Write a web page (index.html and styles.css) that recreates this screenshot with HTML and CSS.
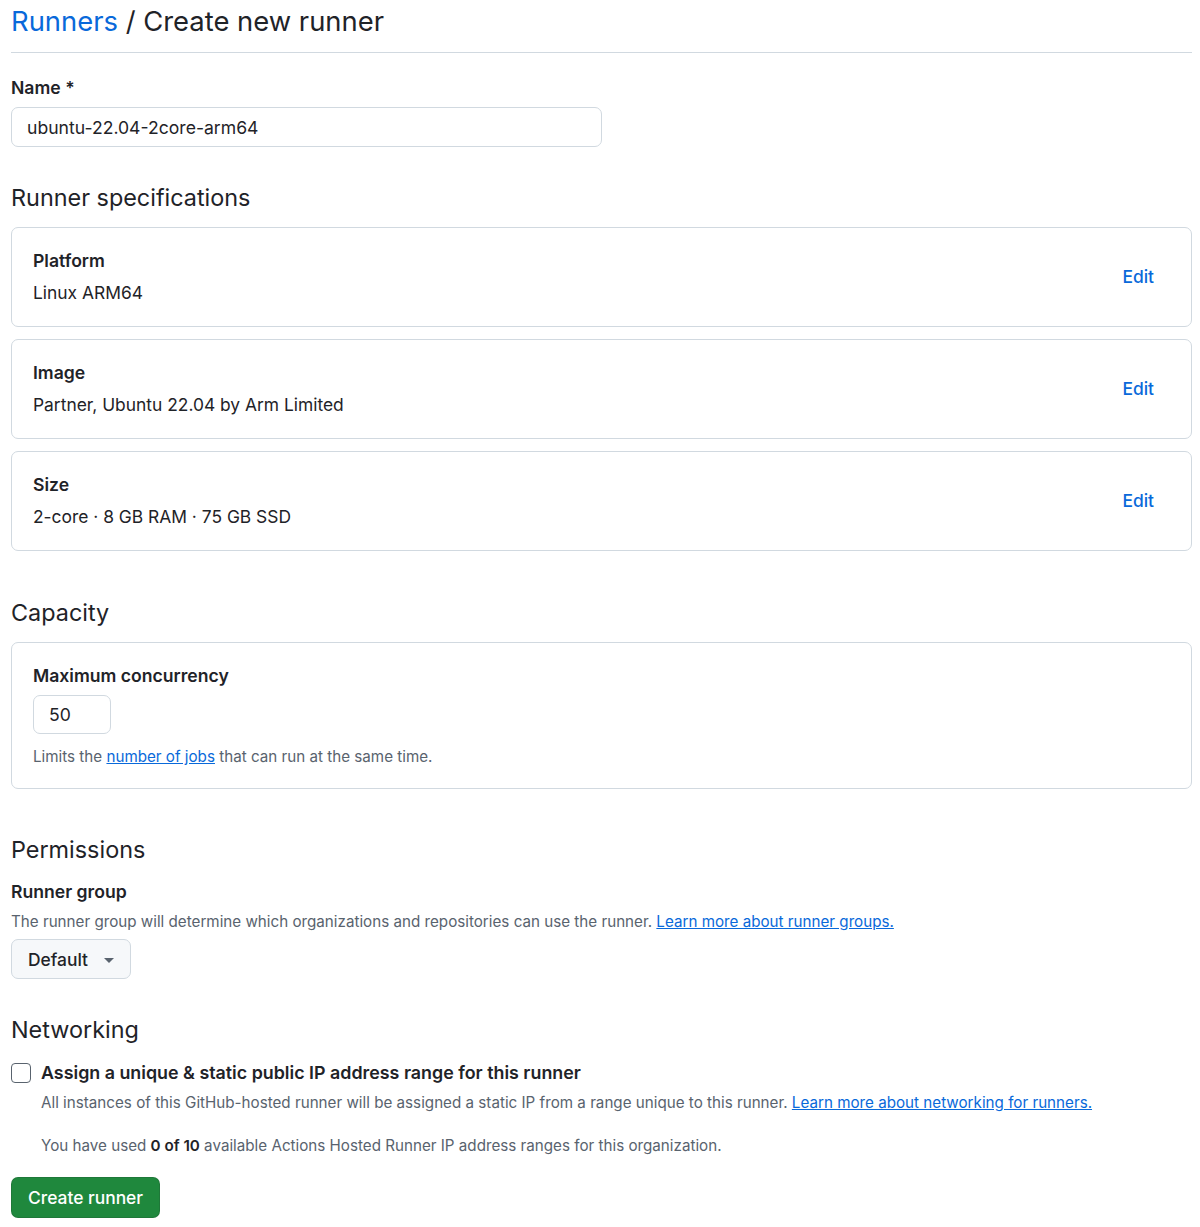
FILE: index.html
```html
<!DOCTYPE html>
<html lang="en">
<head>
<meta charset="utf-8">
<title>Create new runner</title>
<link rel="stylesheet" href="styles.css">
</head>
<body>
<div class="page">
  <header class="page-head">
    <h1 class="title"><a href="#" class="crumb">Runners</a> / Create new runner</h1>
  </header>

  <div class="field">
    <label class="label" for="name">Name *</label>
    <input id="name" class="text-input name-input" type="text" value="ubuntu-22.04-2core-arm64">
  </div>

  <h2 class="section-title spec-title">Runner specifications</h2>
  <div class="spec-list">
    <div class="box spec">
      <div class="spec-body">
        <div class="label">Platform</div>
        <div class="spec-value">Linux ARM64</div>
      </div>
      <a href="#" class="edit">Edit</a>
    </div>
    <div class="box spec">
      <div class="spec-body">
        <div class="label">Image</div>
        <div class="spec-value">Partner, Ubuntu 22.04 by Arm Limited</div>
      </div>
      <a href="#" class="edit">Edit</a>
    </div>
    <div class="box spec">
      <div class="spec-body">
        <div class="label">Size</div>
        <div class="spec-value">2-core · 8 GB RAM · 75 GB SSD</div>
      </div>
      <a href="#" class="edit">Edit</a>
    </div>
  </div>

  <h2 class="section-title cap-title">Capacity</h2>
  <div class="box capacity">
    <label class="label" for="conc">Maximum concurrency</label>
    <input id="conc" class="text-input conc-input" type="text" value="50">
    <p class="note">Limits the <a href="#" class="link">number of jobs</a> that can run at the same time.</p>
  </div>

  <h2 class="section-title perm-title">Permissions</h2>
  <div class="label group-label">Runner group</div>
  <p class="desc">The runner group will determine which organizations and repositories can use the runner. <a href="#" class="link">Learn more about runner groups.</a></p>
  <button class="select-btn" type="button">Default <span class="caret"></span></button>

  <h2 class="section-title net-title">Networking</h2>
  <div class="check-row">
    <span class="checkbox"></span>
    <div class="check-body">
      <div class="label">Assign a unique &amp; static public IP address range for this runner</div>
      <p class="desc check-desc">All instances of this GitHub-hosted runner will be assigned a static IP from a range unique to this runner. <a href="#" class="link">Learn more about networking for runners.</a></p>
      <p class="desc used">You have used <strong>0 of 10</strong> available Actions Hosted Runner IP address ranges for this organization.</p>
    </div>
  </div>

  <button class="primary" type="button">Create runner</button>
</div>
</body>
</html>
```

FILE: styles.css
```css
* { box-sizing: border-box; }

html, body {
  margin: 0;
  padding: 0;
  background: #ffffff;
}

body {
  font-family: Inter, "Noto Sans", "Liberation Sans", sans-serif;
  color: #1f2328;
  font-size: 17.4px;
  line-height: 24px;
}

.page {
  padding: 0 8px 0 11px;
}

.page-head {
  border-bottom: 1px solid #d1d9e0;
  padding: 3px 0 13px;
}

.title {
  margin: 0;
  font-size: 27.4px;
  line-height: 36px;
  font-weight: 400;
  color: #1f2328;
}

.crumb {
  color: #0969da;
  text-decoration: none;
}

.field {
  margin-top: 23px;
}

.label {
  display: block;
  font-weight: 600;
  font-size: 17.6px;
  line-height: 24px;
  color: #1f2328;
}

.check-body .label {
  font-size: 17.85px;
}

.text-input {
  display: block;
  font-family: inherit;
  font-size: 17.6px;
  color: #1f2328;
  border: 1px solid #d1d9e0;
  border-radius: 7px;
  background: #fff;
  padding: 0 15px;
  outline: none;
}

.name-input {
  margin-top: 7px;
  width: 591px;
  height: 40px;
}

.section-title {
  margin: 0;
  font-size: 23.4px;
  line-height: 30px;
  font-weight: 400;
  color: #1f2328;
}

.spec-title { margin-top: 36px; }

.spec-list {
  margin-top: 14px;
  display: flex;
  flex-direction: column;
  gap: 12px;
}

.box {
  border: 1px solid #d1d9e0;
  border-radius: 7px;
  background: #fff;
}

.spec {
  height: 100px;
  padding: 0 37px 0 21px;
  display: flex;
  align-items: center;
  justify-content: space-between;
}

.spec-body {
  display: flex;
  flex-direction: column;
  gap: 8px;
}

.spec-value {
  font-size: 17.4px;
  line-height: 24px;
}

.edit {
  color: #0969da;
  text-decoration: none;
  font-weight: 500;
  font-size: 17.4px;
}

.cap-title { margin-top: 47px; }

.capacity {
  margin-top: 14px;
  padding: 21px 21px 21px;
}

.conc-input {
  margin-top: 7px;
  width: 78px;
  height: 39px;
}

.note {
  margin: 13px 0 0;
  font-size: 15.2px;
  line-height: 20px;
  color: #59636e;
}

.link {
  color: #0969da;
  text-decoration: underline;
}

.perm-title { margin-top: 46px; }

.group-label { margin-top: 15px; }

.desc {
  margin: 0;
  font-size: 15.2px;
  line-height: 20px;
  color: #59636e;
}

.group-label + .desc { margin-top: 8px; }

.select-btn {
  margin-top: 7px;
  display: flex;
  align-items: center;
  gap: 16px;
  height: 40px;
  padding: 0 16px;
  font-family: inherit;
  font-size: 17.4px;
  font-weight: 500;
  color: #1f2328;
  background: #f6f8fa;
  border: 1px solid #d1d9e0;
  border-radius: 7px;
}

.caret {
  width: 0;
  height: 0;
  border-left: 5px solid transparent;
  border-right: 5px solid transparent;
  border-top: 5px solid #59636e;
  margin-top: 2px;
}

.net-title { margin-top: 36px; }

.check-row {
  margin-top: 16px;
  display: flex;
  gap: 10px;
}

.checkbox {
  flex: none;
  width: 20px;
  height: 20px;
  margin-top: 2px;
  border: 1px solid #59636e;
  border-radius: 4px;
  background: #fff;
}

.check-desc { margin-top: 8px; }

.used { margin-top: 23px; }

.used strong { color: #1f2328; font-weight: 600; }

.primary {
  margin-top: 21px;
  display: block;
  height: 41px;
  padding: 0 16px;
  font-family: inherit;
  font-size: 17.4px;
  font-weight: 500;
  color: #fff;
  background: #1f883d;
  border: 1px solid rgba(31, 35, 40, 0.15);
  border-radius: 7px;
}
```
